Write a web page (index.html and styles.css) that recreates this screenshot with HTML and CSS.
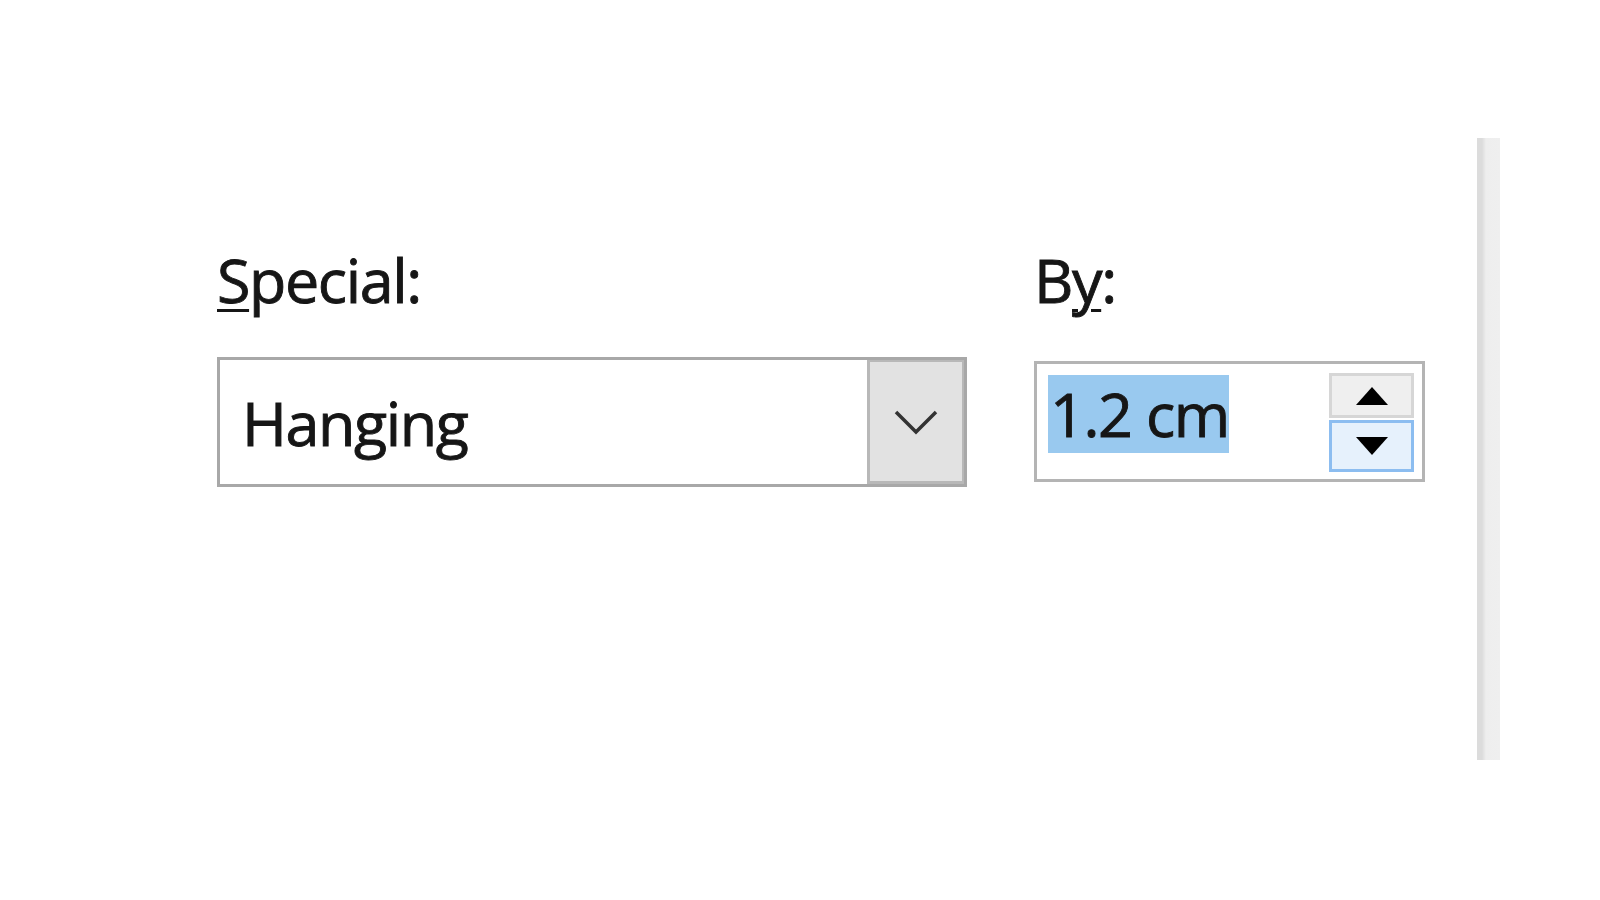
FILE: index.html
```html
<!DOCTYPE html>
<html lang="en">
<head>
    <meta charset="UTF-8">
    <meta name="viewport" content="width=device-width, initial-scale=1.0">
    <title>Indentation</title>
    <link rel="stylesheet" href="styles.css">
</head>
<body>
    <div class="page">
        <!-- Special indent -->
        <div class="field field-special">
            <div class="label"><u>S</u>pecial:</div>
            <div class="combo">
                <span class="combo-text">Hanging</span>
                <div class="combo-button">
                    <svg width="44" height="26" viewBox="0 0 44 26">
                        <polyline points="2,3 22,23 42,3" fill="none" stroke="#333" stroke-width="3.5"/>
                    </svg>
                </div>
            </div>
        </div>

        <!-- By value -->
        <div class="field field-by">
            <div class="label">B<u>y</u>:</div>
            <div class="spin">
                <span class="spin-text">1.2 cm</span>
                <div class="spin-buttons">
                    <div class="spin-up">
                        <svg width="34" height="20" viewBox="0 0 34 20"><polygon points="17,1 33,19 1,19" fill="#000"/></svg>
                    </div>
                    <div class="spin-down">
                        <svg width="34" height="20" viewBox="0 0 34 20"><polygon points="1,1 33,1 17,19" fill="#000"/></svg>
                    </div>
                </div>
            </div>
        </div>

        <!-- Scroll strip on the right -->
        <div class="strip"></div>
    </div>
</body>
</html>
```

FILE: styles.css
```css
body {
    margin: 0;
    background-color: #fff;
    font-family: "Open Sans", "Noto Sans", sans-serif;
    color: #161616;
}
.page {
    display: flex;
    align-items: flex-start;
    height: 900px;
    padding-left: 217px;
}
.field {
    display: flex;
    flex-direction: column;
    padding-top: 240px;
}
.field-special {
    width: 750px;
}
.field-by {
    width: 391px;
    margin-left: 67px;
}
.label,
.combo-text,
.spin-text {
    font-size: 61px;
    letter-spacing: -1.4px;
    -webkit-text-stroke: 0.9px currentColor;
}
.label {
    line-height: 80px;
    height: 80px;
}
.label u {
    text-decoration-thickness: 3px;
    text-underline-offset: 6px;
}
.combo {
    display: flex;
    box-sizing: border-box;
    height: 130px;
    margin-top: 37px;
    border: 3px solid #a8a8a8;
    background: #fff;
}
.combo-text {
    flex: 1;
    padding: 23px 0 0 22px;
    line-height: 80px;
}
.combo-button {
    display: flex;
    align-items: center;
    justify-content: center;
    box-sizing: border-box;
    width: 97px;
    border: 3px solid #b8b8b8;
    border-right-width: 2px;
    border-top-width: 2px;
    background: #e2e2e2;
}
.spin {
    display: flex;
    box-sizing: border-box;
    height: 121px;
    margin-top: 41px;
    padding: 11px 8px 7px 11px;
    border: 3px solid #b4b4b4;
    background: #fff;
}
.spin-text {
    align-self: flex-start;
    padding-left: 2px;
    background: #99c9ef;
    line-height: 78px;
}
.spin-buttons {
    display: flex;
    flex-direction: column;
    gap: 2px;
    margin-left: auto;
    margin-top: -2px;
    width: 85px;
}
.spin-up,
.spin-down {
    display: flex;
    align-items: center;
    justify-content: center;
    box-sizing: border-box;
    border: 3px solid;
}
.spin-up {
    height: 45px;
    border-color: #d6d6d6;
    background: #efefef;
}
.spin-down {
    height: 52px;
    border-color: #8cbdf0;
    background: #e6f1fc;
}
.strip {
    width: 23px;
    height: 622px;
    margin-top: 138px;
    margin-left: 52px;
    background: linear-gradient(to right, #dcdcdc 0, #dcdcdc 5px, #eeeeee 9px, #efefef 100%);
}
```
